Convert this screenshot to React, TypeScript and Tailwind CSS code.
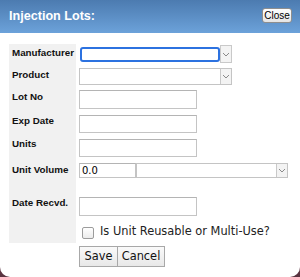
import React from 'react';

const labelFont = { fontFamily: '"Liberation Sans", Arial, sans-serif' };
const uiFont = { fontFamily: '"DejaVu Sans", Verdana, sans-serif' };

const Chevron = () => (
  <svg width="8" height="5" viewBox="0 0 8 5" fill="none">
    <path d="M1 1l3 3 3-3" stroke="#8a8a8a" strokeWidth="1" />
  </svg>
);

const SelectBox = ({ className, focused }: { className: string; focused?: boolean }) => (
  <div className={`flex ${className}`}>
    {focused ? (
      <>
        <div className="flex-1 flex items-center pl-[1px]">
          <div className="w-full h-[15px] rounded-[3px] border-2 border-[#2c72e0] bg-white" />
        </div>
        <div className="w-[12px] border border-[#c9c9c9] bg-[#f3f3f3] flex items-center justify-center">
          <Chevron />
        </div>
      </>
    ) : (
      <div className="flex-1 flex border border-[#c4c4c4] bg-white">
        <div className="flex-1" />
        <div className="w-[11px] border-l border-[#c9c9c9] bg-[#f3f3f3] flex items-center justify-center">
          <Chevron />
        </div>
      </div>
    )}
  </div>
);

const TextBox = ({ className, value }: { className: string; value?: string }) => (
  <div
    className={`border border-[#c4c4c4] border-t-[#b4b4b4] bg-white text-[10px] text-black flex items-center pl-[2px] ${className}`}
    style={uiFont}
  >
    {value}
  </div>
);

const Label = ({ text, className }: { text: string; className: string }) => (
  <div className={`w-[67px] shrink-0 pl-[3px] text-[9.8px] leading-[12px] font-bold text-[#111] ${className}`} style={labelFont}>
    {text}
  </div>
);

export default function App() {
  return (
    <div className="w-[300px] h-[277px] bg-[#5a3340]">
      <div className="w-[300px] h-[277px] bg-white rounded-b-[10px] overflow-hidden flex flex-col">
        <div className="h-[33px] shrink-0 bg-gradient-to-b from-[#4c7bb0] to-[#6ca2da] flex items-start justify-between pl-[9px] pr-[8px]">
          <span className="mt-[9px] text-white font-bold text-[12.6px] leading-[15px]" style={labelFont}>
            Injection Lots:
          </span>
          <button
            className="mt-[8px] h-[15px] w-[30px] rounded-[3px] border border-[#8e8e8e] bg-gradient-to-b from-white to-[#e4e4e4] text-[10px] leading-[13px] text-black"
            style={labelFont}
          >
            Close
          </button>
        </div>

        <div className="pt-[11px] pl-[9px] flex flex-col">
          {/* Manufacturer */}
          <div className="flex h-[22px] items-start gap-[3px]">
            <Label text="Manufacturer" className="h-full bg-[#f1f1f1] pt-[3px]" />
            <SelectBox className="mt-[1px] w-[153px] h-[18px]" focused />
          </div>
          {/* Product */}
          <div className="flex h-[22px] items-start gap-[3px]">
            <Label text="Product" className="h-full bg-[#f1f1f1] pt-[3px]" />
            <SelectBox className="mt-[2px] w-[153px] h-[17px]" />
          </div>
          <div className="flex h-[24px] items-start gap-[3px]">
            <Label text="Lot No" className="h-full bg-[#f1f1f1] pt-[3px]" />
            <TextBox className="mt-[2px] w-[118px] h-[19px]" />
          </div>
          <div className="flex h-[24px] items-start gap-[3px]">
            <Label text="Exp Date" className="h-full bg-[#f1f1f1] pt-[3px]" />
            <TextBox className="mt-[3px] w-[118px] h-[18px]" />
          </div>
          <div className="flex h-[24px] items-start gap-[3px]">
            <Label text="Units" className="h-full bg-[#f1f1f1] pt-[2px]" />
            <TextBox className="mt-[3px] w-[118px] h-[18px]" />
          </div>
          <div className="flex h-[32px] items-start gap-[3px]">
            <Label text="Unit Volume" className="h-full bg-[#f1f1f1] pt-[4px]" />
            <div className="mt-[3px] flex">
              <TextBox className="w-[57px] h-[15px]" value="0.0" />
              <SelectBox className="w-[152px] h-[15px]" />
            </div>
          </div>
          <div className="flex h-[27px] items-start gap-[3px]">
            <Label text="Date Recvd." className="h-full bg-[#f1f1f1] pt-[5px]" />
            <TextBox className="mt-[5px] w-[118px] h-[19px]" />
          </div>
          <div className="flex h-[24px] items-start gap-[3px]">
            <Label text="" className="h-full bg-[#f1f1f1]" />
            <div className="mt-[4px] flex items-center gap-[6px] pl-[3px]">
              <div className="mt-[4px] w-[12px] h-[12px] rounded-[2px] border border-[#9c9c9c] bg-gradient-to-b from-white to-[#ececec]" />
              <span className="text-[11.4px] leading-[13px] text-[#222]" style={uiFont}>
                Is Unit Reusable or Multi-Use?
              </span>
            </div>
          </div>
          <div className="flex pl-[70px] pt-[3px]">
            <button
              className="h-[21px] w-[39px] border border-[#a8a8a8] bg-gradient-to-b from-[#fafafa] to-[#e8e8e8] text-[11.4px] text-[#111]"
              style={uiFont}
            >
              Save
            </button>
            <button
              className="h-[21px] w-[47px] border border-l-0 border-[#a8a8a8] bg-gradient-to-b from-[#fafafa] to-[#e8e8e8] text-[11.4px] text-[#111]"
              style={uiFont}
            >
              Cancel
            </button>
          </div>
        </div>
      </div>
    </div>
  );
}
